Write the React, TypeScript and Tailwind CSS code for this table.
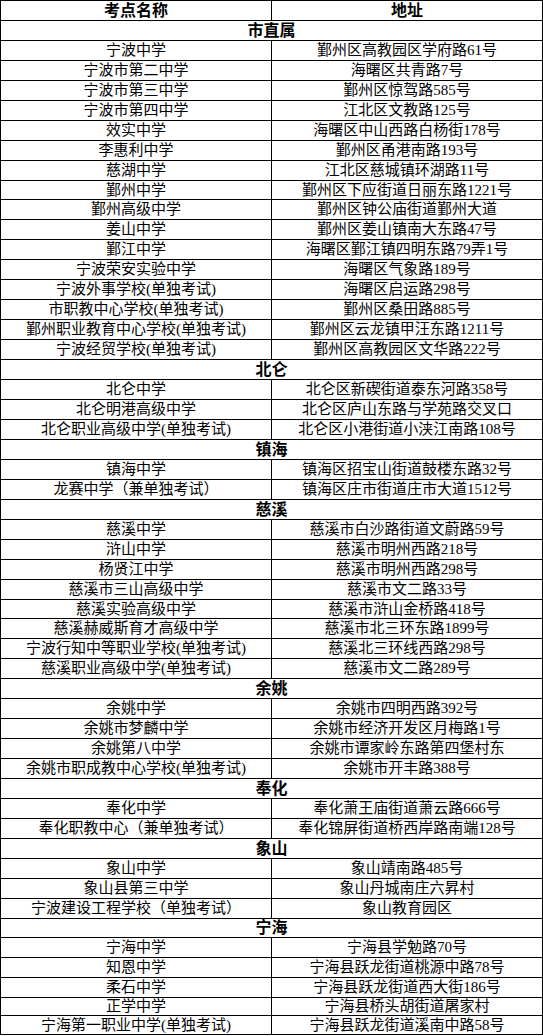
const data: [string, [string, string][]][] = [
  [
    "市直属",
    [
      ["宁波中学", "鄞州区高教园区学府路61号"],
      ["宁波市第二中学", "海曙区共青路7号"],
      ["宁波市第三中学", "鄞州区惊驾路585号"],
      ["宁波市第四中学", "江北区文教路125号"],
      ["效实中学", "海曙区中山西路白杨街178号"],
      ["李惠利中学", "鄞州区甬港南路193号"],
      ["慈湖中学", "江北区慈城镇环湖路11号"],
      ["鄞州中学", "鄞州区下应街道日丽东路1221号"],
      ["鄞州高级中学", "鄞州区钟公庙街道鄞州大道"],
      ["姜山中学", "鄞州区姜山镇南大东路47号"],
      ["鄞江中学", "海曙区鄞江镇四明东路79弄1号"],
      ["宁波荣安实验中学", "海曙区气象路189号"],
      ["宁波外事学校(单独考试)", "海曙区启运路298号"],
      ["市职教中心学校(单独考试)", "鄞州区桑田路885号"],
      ["鄞州职业教育中心学校(单独考试)", "鄞州区云龙镇甲汪东路1211号"],
      ["宁波经贸学校(单独考试)", "鄞州区高教园区文华路222号"],
    ],
  ],
  [
    "北仑",
    [
      ["北仑中学", "北仑区新碶街道泰东河路358号"],
      ["北仑明港高级中学", "北仑区庐山东路与学苑路交叉口"],
      ["北仑职业高级中学(单独考试)", "北仑区小港街道小浃江南路108号"],
    ],
  ],
  [
    "镇海",
    [
      ["镇海中学", "镇海区招宝山街道鼓楼东路32号"],
      ["龙赛中学（兼单独考试）", "镇海区庄市街道庄市大道1512号"],
    ],
  ],
  [
    "慈溪",
    [
      ["慈溪中学", "慈溪市白沙路街道文蔚路59号"],
      ["浒山中学", "慈溪市明州西路218号"],
      ["杨贤江中学", "慈溪市明州西路298号"],
      ["慈溪市三山高级中学", "慈溪市文二路33号"],
      ["慈溪实验高级中学", "慈溪市浒山金桥路418号"],
      ["慈溪赫威斯育才高级中学", "慈溪市北三环东路1899号"],
      ["宁波行知中等职业学校(单独考试)", "慈溪北三环线西路298号"],
      ["慈溪职业高级中学(单独考试)", "慈溪市文二路289号"],
    ],
  ],
  [
    "余姚",
    [
      ["余姚中学", "余姚市四明西路392号"],
      ["余姚市梦麟中学", "余姚市经济开发区月梅路1号"],
      ["余姚第八中学", "余姚市谭家岭东路第四堡村东"],
      ["余姚市职成教中心学校(单独考试)", "余姚市开丰路388号"],
    ],
  ],
  [
    "奉化",
    [
      ["奉化中学", "奉化萧王庙街道萧云路666号"],
      ["奉化职教中心（兼单独考试）", "奉化锦屏街道桥西岸路南端128号"],
    ],
  ],
  [
    "象山",
    [
      ["象山中学", "象山靖南路485号"],
      ["象山县第三中学", "象山丹城南庄六昇村"],
      ["宁波建设工程学校（单独考试）", "象山教育园区"],
    ],
  ],
  [
    "宁海",
    [
      ["宁海中学", "宁海县学勉路70号"],
      ["知恩中学", "宁海县跃龙街道桃源中路78号"],
      ["柔石中学", "宁海县跃龙街道西大街186号"],
      ["正学中学", "宁海县桥头胡街道屠家村"],
      ["宁海第一职业中学(单独考试)", "宁海县跃龙街道溪南中路58号"],
    ],
  ],
];

// a few rows in the picture are a pixel shorter
const heights: Record<number, string> = {
  9: "h-[19px]",
  30: "h-[19px]",
  46: "h-[19px]",
  50: "h-[18px]",
  51: "h-[19px]",
};

type Row =
  | { kind: "head" }
  | { kind: "section"; name: string }
  | { kind: "item"; name: string; addr: string };

const rows: Row[] = [{ kind: "head" }];
for (const [section, items] of data) {
  rows.push({ kind: "section", name: section });
  for (const [name, addr] of items) rows.push({ kind: "item", name, addr });
}

export default function App() {
  return (
    <div
      className="w-[543px] bg-white text-black text-[15px] leading-none"
      style={{ fontFamily: '"Liberation Serif", "Noto Sans CJK SC", serif' }}
    >
      <div className="border-t border-l border-r border-black">
        {rows.map((row, i) => {
          const h = heights[i] ?? "h-5";
          if (row.kind === "section") {
            return (
              <div key={i} className={`${h} flex items-center justify-center border-b border-black font-bold text-[16px]`}>
                {row.name}
              </div>
            );
          }
          const bold = row.kind === "head" ? "font-bold text-[16px]" : "";
          return (
            <div key={i} className={`${h} flex border-b border-black ${bold}`}>
              <div className="w-[271px] shrink-0 flex items-center justify-center border-r border-black whitespace-nowrap">
                {row.kind === "head" ? "考点名称" : row.name}
              </div>
              <div className="flex-1 flex items-center justify-center whitespace-nowrap">
                {row.kind === "head" ? "地址" : row.addr}
              </div>
            </div>
          );
        })}
      </div>
    </div>
  );
}
